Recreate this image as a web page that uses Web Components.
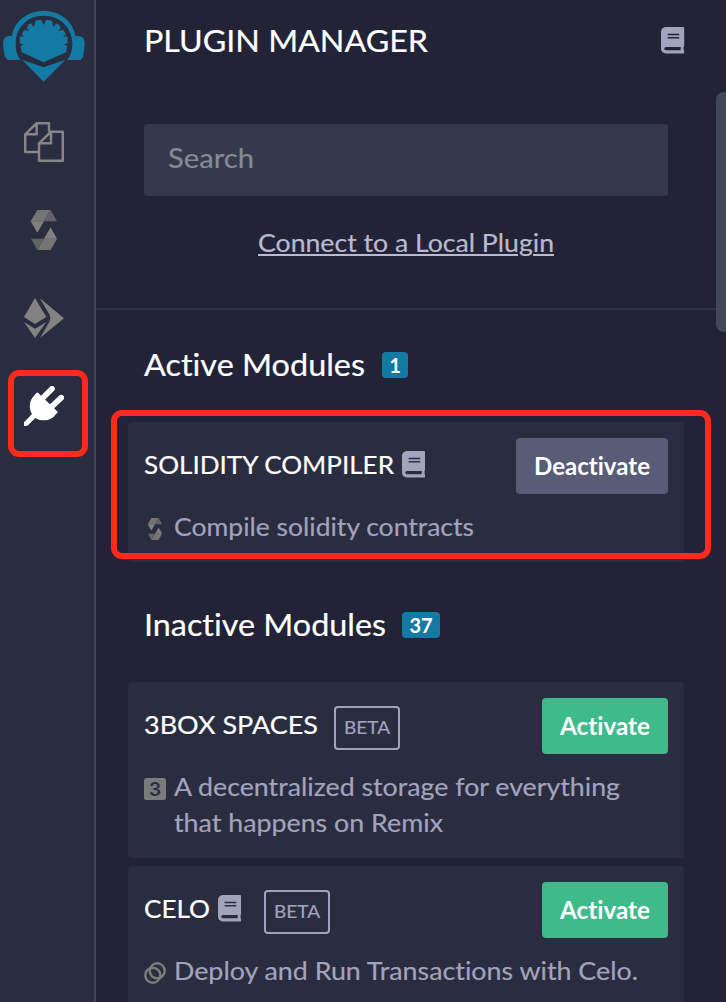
<!DOCTYPE html>
<html lang="en">
<head>
<meta charset="utf-8">
<title>Plugin Manager</title>
<style>
html,body{margin:0;height:100%;overflow:hidden;background:#222336}
body{font-family:Lato,"Open Sans",sans-serif;color:#a2a3bd;font-variant-ligatures:none}
</style>
</head>
<body>
<plugin-app>
  <icon-rail slot="rail"></icon-rail>
  <manager-head slot="panel"></manager-head>
  <module-section slot="panel" style="padding-top:36px">
    <fit-text slot="title" w="221">Active Modules</fit-text><count-badge slot="title">1</count-badge>
    <module-card marked>
      <fit-text slot="name" w="250">SOLIDITY COMPILER</fit-text>
      <ui-icon slot="name" name="book" style="margin:0 0 3px 8px"></ui-icon>
      <action-button slot="action" style="--w:152px;--bg:#595c76"><fit-text w="116">Deactivate</fit-text></action-button>
      <ui-icon slot="icon" name="solidity"></ui-icon>
      <fit-text w="300">Compile solidity contracts</fit-text>
    </module-card>
  </module-section>
  <module-section slot="panel" style="padding-top:44px">
    <fit-text slot="title" w="242">Inactive Modules</fit-text><count-badge slot="title" style="--w:38px;margin-left:16px">37</count-badge>
    <module-card>
      <fit-text slot="name" w="174">3BOX SPACES</fit-text>
      <beta-tag slot="name" style="margin-left:16px"></beta-tag>
      <action-button slot="action"><fit-text w="90">Activate</fit-text></action-button>
      <ui-icon slot="icon" name="three"></ui-icon>
      <fit-text w="446">A decentralized storage for everything</fit-text>
      <fit-text w="269">that happens on Remix</fit-text>
    </module-card>
    <module-card>
      <fit-text slot="name" w="66">CELO</fit-text>
      <ui-icon slot="name" name="book" style="margin:0 0 3px 8px"></ui-icon>
      <beta-tag slot="name" style="margin-left:23px"></beta-tag>
      <action-button slot="action"><fit-text w="90">Activate</fit-text></action-button>
      <ui-icon slot="icon" name="celo"></ui-icon>
      <fit-text w="464">Deploy and Run Transactions with Celo.</fit-text>
    </module-card>
  </module-section>
</plugin-app>
<script>
const define = (tag, html, setup) => customElements.define(tag, class extends HTMLElement {
  constructor() {
    super();
    this.attachShadow({mode: 'open'}).innerHTML = html;
  }
  connectedCallback() { if (setup) setup(this, this.shadowRoot); }
});

define('plugin-app', `<style>
  :host{display:grid;grid-template-columns:96px 1fr;height:1002px;width:726px;overflow:hidden;position:relative}
  main{min-width:0;height:1002px;overflow:hidden}
  .bar{position:absolute;left:716px;top:92px;width:16px;height:240px;border-radius:8px;background:#444759}
</style><slot name="rail"></slot><main><slot name="panel"></slot></main><div class="bar"></div>`);

define('icon-rail', `<style>
  :host{display:flex;flex-direction:column;align-items:center;box-sizing:border-box;width:96px;height:1002px;padding:11px 6px 0 0;background:#2a2c3f;border-right:2px solid #3f4256;position:relative}
  ui-icon{margin-bottom:48px}
  ui-icon[name=logo]{margin:0 0 40px}
  .mark{position:absolute;left:8px;top:370px;width:80px;height:87px;box-sizing:border-box;border:6px solid #ff2a1c;border-radius:11px}
</style><ui-icon name="logo"></ui-icon><ui-icon name="files"></ui-icon><ui-icon name="solidity" style="--s:40px"></ui-icon><ui-icon name="deploy"></ui-icon><ui-icon name="plug"></ui-icon><div class="mark"></div>`);

define('manager-head', `<style>
  :host{display:block;height:308px;border-bottom:2px solid #2d3446}
  header{display:flex;align-items:center;justify-content:space-between;height:83px;padding:0 41.5px 0 48px;color:#fff;font-size:31.7px;--up:-2px}
  header ui-icon{margin-bottom:2px}
  .search{box-sizing:border-box;margin:41px 58px 0 48px;height:72px;border-radius:4px;background:#35394b;padding:0 24px;display:flex;align-items:center;color:#858b94;font-size:27px}
  .search fit-text{margin-bottom:3px}
  .link{display:flex;justify-content:center;height:36px;line-height:36px;margin:29px 58px 0 48px;font-size:25.6px;color:#b9b9d0}
  .link fit-text{--line:underline}
</style><header><fit-text w="284">PLUGIN MANAGER</fit-text><ui-icon name="book"></ui-icon></header>
<div class="search"><fit-text w="86">Search</fit-text></div>
<div class="link"><fit-text w="296">Connect to a Local Plugin</fit-text></div>`);

define('module-section', `<style>
  :host{display:block}
  h2{margin:0 0 36px 48px;display:flex;align-items:center;height:40px;line-height:40px;font-weight:400;font-size:31.7px;color:#fff;--up:-2px}
  .list{display:grid;gap:8px;padding:0 42px 0 32px}
</style><h2><slot name="title"></slot></h2><div class="list"><slot></slot></div>`);

define('module-card', `<style>
  :host{display:block;box-sizing:border-box;padding:16px;border-radius:4px;background:#2a2c3f;position:relative;font-size:25.6px}
  .top{display:flex;height:56px;align-items:center;justify-content:space-between;margin-bottom:16px}
  .name{display:flex;align-items:center;color:#fff}
  .name,.body{--up:-2px}
  .desc{display:flex;line-height:36px}
  .icon{width:22px;padding-top:8px;margin-right:8px;line-height:0}
  .body{display:flex;flex-direction:column;align-items:flex-start}
  :host([marked])::after{content:"";position:absolute;left:-17px;top:-12px;width:600px;height:149px;box-sizing:border-box;border:6.5px solid #ff2a1c;border-radius:11px}
</style><div class="top"><div class="name"><slot name="name"></slot></div><slot name="action"></slot></div>
<div class="desc"><div class="icon"><slot name="icon"></slot></div><div class="body"><slot></slot></div></div>`);

define('count-badge', `<style>
  :host{display:flex;align-items:center;justify-content:center;width:var(--w,26px);height:26px;margin:0 0 2px 17px;border-radius:4px;background:#127aa3;color:#fff;font:700 20px/26px Lato,sans-serif}
</style><slot></slot>`);

define('beta-tag', `<style>
  :host{display:flex;box-sizing:border-box;width:66px;height:44px;margin-top:4px;border:2px solid #a2a3bd;border-radius:4px;align-items:center;justify-content:center;font-size:18px;color:#a2a3bd;--up:-1px}
</style><fit-text w="46">BETA</fit-text>`);

define('action-button', `<style>
  :host{display:flex;width:var(--w,126px);height:56px;border-radius:4px;background:var(--bg,#3fba8a);color:#fff;align-items:center;justify-content:center;font-size:24px;font-weight:700;--bold:0px}
</style><slot></slot>`);

const icons = {
  book: [23.2, 26.5, '0 0 448 512', '<path fill="#a2a3bd" d="M448 360V24c0-13.3-10.7-24-24-24H96C43 0 0 43 0 96v320c0 53 43 96 96 96h328c13.3 0 24-10.7 24-24v-16c0-7.5-3.5-14.3-8.9-18.7-4.2-15.4-4.2-59.3 0-74.7 5.4-4.3 8.9-11.1 8.9-18.6zM128 134c0-3.3 2.7-6 6-6h212c3.3 0 6 2.7 6 6v20c0 3.3-2.7 6-6 6H134c-3.3 0-6-2.7-6-6v-20zm0 64c0-3.3 2.7-6 6-6h212c3.3 0 6 2.7 6 6v20c0 3.3-2.7 6-6 6H134c-3.3 0-6-2.7-6-6v-20zm253.4 250H96c-17.7 0-32-14.3-32-32 0-17.6 14.4-32 32-32h285.4c-1.9 17.1-1.9 46.9 0 64z"/>'],
  logo: [82, 71, '9 33 246 213', '<g fill="#127aa3"><path d="M36 108C42 64 82 33 131 33s89 31 95 75h10q15 0 18 19-1 48-13 53h-40q16-18 16-48c0-50-37-85-86-85s-84 35-84 85q0 30 15 48H24q-13-5-15-53 1-15 15-19z"/><path d="M131 187L65 157L61 137L71 134L59 129L60 109L74 110L65 104L72 89L87 94L81 85L85 74L93 70L102 82L106 62L123 59L131 75L139 59L156 62L160 82L169 70L178 75L182 85L175 94L190 89L198 104L188 110L202 109L203 129L191 134L202 137L198 157Z"/><path d="M66 179L131 202L196 179L131 245Z"/></g>'],
  files: [40, 40, '72 366 120 120', '<g fill="none" stroke="#868686" stroke-width="7.4" stroke-linejoin="round"><path d="M117 456H75.7V403L110 369.700H147V395M75 403H110V369M117 482.300V430L153 395H188.300V482.300ZM117 430H153V395"/></g>'],
  solidity: [22, 22, '72 60 120 120', '<path fill="#747474" d="M112 60H152L132 94H92Z"/><path fill="#626268" d="M152 60L171 94H132Z"/><path fill="#808080" d="M92 94H132L112 128Z"/><path fill="#747474" d="M152 180H112L132 146H171Z"/><path fill="#626268" d="M112 180L93 146H132Z"/><path fill="#808080" d="M171 146H132L152 112Z"/>'],
  deploy: [40, 40, '72 324 120 120', '<g fill="#828282"><path d="M105 324L139 381L105 402L72 381Z"/><path d="M72 396L105 416L139 396L105 444Z"/><path d="M119 324L192 385L120 444L149 394Q154 384 149 375Z"/></g>'],
  plug: [40, 40, '72 588 120 120', '<path stroke="#fff" stroke-width="17" stroke-linecap="round" d="M132 620L156 596M156 649L184 623"/><path fill="#fff" d="M114 608L173 665Q175 669 167 673C160 685 146 691 131 691C121 691 112 688 106 684L84 706Q82 708 78 708H72V697L96 672C86 655 87 632 102 617L109 609Q111 606 114 608Z"/>'],
  three: [22, 22, '0 0 22 22', '<rect width="22" height="22" rx="2.5" fill="#7b7b7b"/><text x="11" y="18" text-anchor="middle" font-family="Inter,sans-serif" font-size="19" font-weight="600" fill="#2a2c3f">3</text>'],
  celo: [22, 22, '0 0 22 22', '<g fill="none" stroke="#7d7d7a" stroke-width="2.4"><circle cx="13.2" cy="8.8" r="7.5"/><circle cx="8.8" cy="13.2" r="7.5"/></g>']
};
define('ui-icon', `<style>:host{display:block;flex:none;line-height:0}svg{display:block}</style><div></div>`, (el, root) => {
  const [w, h, box, art] = icons[el.getAttribute('name')];
  root.querySelector('div').innerHTML = `<svg style="width:var(--s,${w}px);height:var(--s,${h}px)" viewBox="${box}">${art}</svg>`;
});

// Stretches its text so that the line fills the width given in "w".
define('fit-text', `<style>
  :host{display:block;white-space:nowrap;flex:none}
  span{display:inline-block;transform-origin:0 50%;-webkit-text-stroke:var(--bold,.2px) currentColor;text-decoration:var(--line,none) 2px;text-underline-offset:2px}
</style><span><slot></slot></span>`, (el, root) => {
  const span = root.querySelector('span');
  const want = +el.getAttribute('w');
  span.style.transform = `translateY(var(--up,-1px)) scaleX(${want / span.getBoundingClientRect().width})`;
  el.style.width = want + 'px';
});
</script>
</body>
</html>
